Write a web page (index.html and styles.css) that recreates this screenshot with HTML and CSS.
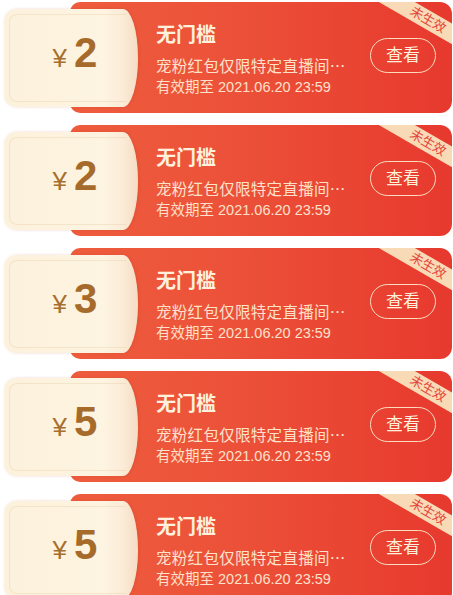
FILE: index.html
```html
<!DOCTYPE html>
<html lang="zh-CN">
<head>
    <meta charset="UTF-8">
    <meta name="viewport" content="width=device-width, initial-scale=1.0">
    <title>红包列表</title>
    <link rel="stylesheet" href="styles.css">
</head>
<body>
    <!-- 红包列表 -->
    <div class="list">
        <div class="coupon">
            <div class="ticket"><span class="yen">¥</span><span class="amount">2</span></div>
            <div class="body">
                <div class="tag">未生效</div>
                <div class="info">
                    <div class="title">无门槛</div>
                    <div class="desc">宠粉红包仅限特定直播间…</div>
                    <div class="date">有效期至 2021.06.20 23:59</div>
                </div>
                <div class="btn">查看</div>
            </div>
        </div>

        <div class="coupon">
            <div class="ticket"><span class="yen">¥</span><span class="amount">2</span></div>
            <div class="body">
                <div class="tag">未生效</div>
                <div class="info">
                    <div class="title">无门槛</div>
                    <div class="desc">宠粉红包仅限特定直播间…</div>
                    <div class="date">有效期至 2021.06.20 23:59</div>
                </div>
                <div class="btn">查看</div>
            </div>
        </div>

        <div class="coupon">
            <div class="ticket"><span class="yen">¥</span><span class="amount">3</span></div>
            <div class="body">
                <div class="tag">未生效</div>
                <div class="info">
                    <div class="title">无门槛</div>
                    <div class="desc">宠粉红包仅限特定直播间…</div>
                    <div class="date">有效期至 2021.06.20 23:59</div>
                </div>
                <div class="btn">查看</div>
            </div>
        </div>

        <div class="coupon">
            <div class="ticket"><span class="yen">¥</span><span class="amount">5</span></div>
            <div class="body">
                <div class="tag">未生效</div>
                <div class="info">
                    <div class="title">无门槛</div>
                    <div class="desc">宠粉红包仅限特定直播间…</div>
                    <div class="date">有效期至 2021.06.20 23:59</div>
                </div>
                <div class="btn">查看</div>
            </div>
        </div>

        <div class="coupon">
            <div class="ticket"><span class="yen">¥</span><span class="amount">5</span></div>
            <div class="body">
                <div class="tag">未生效</div>
                <div class="info">
                    <div class="title">无门槛</div>
                    <div class="desc">宠粉红包仅限特定直播间…</div>
                    <div class="date">有效期至 2021.06.20 23:59</div>
                </div>
                <div class="btn">查看</div>
            </div>
        </div>
    </div>
</body>
</html>
```

FILE: styles.css
```css
body {
    margin: 0;
    background: #fff;
    font-family: 'Liberation Sans', 'Noto Sans CJK SC', sans-serif;
}
.list {
    padding: 2px 1px 0 4px;
}
.coupon {
    display: flex;
    align-items: center;
    height: 111px;
    margin-bottom: 12px;
}
.ticket {
    position: relative;
    z-index: 1;
    flex: none;
    width: 134px;
    height: 98px;
    margin-right: -68px;
    display: flex;
    align-items: baseline;
    justify-content: center;
    padding: 20px 0 0 8px;
    box-sizing: border-box;
    border-radius: 12px 15px 15px 12px / 12px 50% 50% 12px;
    background: linear-gradient(90deg, #fcf1dc 0%, #fdf4e1 74%, #fbecd8 88%, #f6dcc3 100%);
    box-shadow: 1px 0 3px rgba(170, 60, 30, 0.2);
}
.ticket::before {
    content: '';
    position: absolute;
    top: 5px;
    bottom: 5px;
    left: 5px;
    right: 12px;
    border: 1px solid rgba(226, 196, 150, 0.3);
    border-right: none;
    border-radius: 8px 0 0 8px;
}
.yen {
    font-size: 26px;
    color: #a66f2d;
    margin-right: 7px;
}
.amount {
    font-size: 42px;
    font-weight: bold;
    color: #a66b2a;
}
.body {
    position: relative;
    overflow: hidden;
    flex: 1;
    height: 100%;
    display: flex;
    align-items: center;
    padding: 0 16px 0 86px;
    border-radius: 10px 12px 12px 10px;
    background: linear-gradient(90deg, #ee5c3d 0%, #ec5239 40%, #e7392e 100%);
}
.info {
    flex: 1;
    align-self: flex-start;
    padding-top: 21px;
    color: #fff1dd;
}
.title {
    font-size: 20px;
    line-height: 24px;
    font-weight: bold;
}
.desc {
    margin-top: 7px;
    font-family: 'Noto Sans CJK SC', sans-serif;
    font-size: 15.5px;
    line-height: 22px;
    letter-spacing: 0.3px;
    color: #fde1cb;
    white-space: nowrap;
}
.date {
    margin-top: 1px;
    font-size: 14.5px;
    line-height: 20px;
    color: #fde1cb;
}
.btn {
    flex: none;
    width: 64px;
    height: 33px;
    margin-bottom: 4px;
    border: 1px solid #fcdcbe;
    border-radius: 18px;
    color: #fff1dd;
    font-size: 17px;
    line-height: 33px;
    text-align: center;
}
.tag {
    position: absolute;
    top: 9px;
    right: -28px;
    width: 104px;
    height: 18px;
    line-height: 18px;
    background: #f8dbb6;
    color: #e6453a;
    font-size: 13px;
    text-align: center;
    transform: rotate(30deg);
}
```
